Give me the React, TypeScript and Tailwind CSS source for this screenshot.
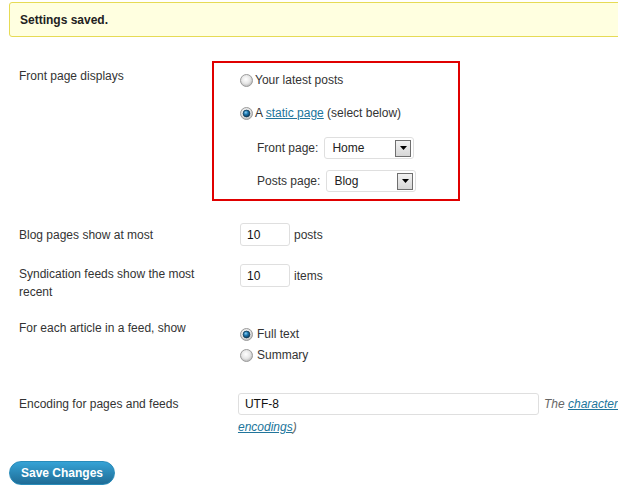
import React from 'react';

function Radio({ checked }: { checked?: boolean }) {
  return (
    <svg width="13" height="13" viewBox="0 0 13 13" className="shrink-0">
      <defs>
        <radialGradient id="rg-off" cx="45%" cy="40%" r="60%">
          <stop offset="0%" stopColor="#ffffff" />
          <stop offset="60%" stopColor="#e6e6e6" />
          <stop offset="100%" stopColor="#b8b8b8" />
        </radialGradient>
        <radialGradient id="rg-on" cx="40%" cy="35%" r="65%">
          <stop offset="0%" stopColor="#8fd0f2" />
          <stop offset="45%" stopColor="#1f7ab3" />
          <stop offset="100%" stopColor="#0b3a5c" />
        </radialGradient>
      </defs>
      <circle cx="6.5" cy="6.5" r="6" fill="url(#rg-off)" stroke="#9c9c9c" strokeWidth="1" />
      {checked && <circle cx="6.5" cy="6.5" r="3.4" fill="url(#rg-on)" stroke="#123a55" strokeWidth="0.8" />}
    </svg>
  );
}

function Select({ value }: { value: string }) {
  return (
    <div className="flex h-[22px] w-[90px] items-center justify-between rounded-[3px] border border-[#dfdfdf] bg-white pl-[7px] pr-[2px] text-[#222]">
      <span>{value}</span>
      <span className="flex h-[17px] w-[16px] items-center justify-center border border-[#6f6f6f] bg-gradient-to-b from-[#f2f2f2] to-[#d6d6d6]">
        <svg width="7" height="4" viewBox="0 0 7 4">
          <polygon points="0,0 7,0 3.5,4" fill="#000" />
        </svg>
      </span>
    </div>
  );
}

function NumberBox({ value }: { value: string }) {
  return (
    <div className="flex h-[23px] w-[50px] items-center rounded-[3px] border border-[#dfdfdf] bg-white pl-[6px] text-[#111]">
      {value}
    </div>
  );
}

export default function App() {
  return (
    <div className="h-[493px] w-[618px] overflow-hidden bg-white pl-[9px] font-['Liberation_Sans',Arial,sans-serif] text-[12px] leading-[18px] text-[#333]">
      <div className="mt-[2px] flex h-[35px] w-[640px] items-center rounded-[3px] border border-[#e6db55] bg-[#ffffe0] pl-[10px]">
        <p className="font-bold text-[#222]">Settings saved.</p>
      </div>

      <div className="pl-[10px]">
        {/* Front page displays */}
        <div className="mt-[24px] flex items-start">
          <div className="w-[193px] pt-[6px]">Front page displays</div>
          <div className="box-border h-[140px] w-[248px] border-2 border-[#e00000] pl-[26px] pt-[8px]">
            <label className="flex h-[18px] items-center gap-[2px]">
              <Radio />
              <span>Your latest posts</span>
            </label>
            <label className="mt-[15px] flex h-[18px] items-center gap-[2px]">
              <Radio checked />
              <span>
                A <a className="text-[#21759b] underline">static page</a> (select below)
              </span>
            </label>
            <div className="ml-[17px] mt-[15px] flex items-center gap-[6px]">
              <span>Front page:</span>
              <Select value="Home" />
            </div>
            <div className="ml-[17px] mt-[11px] flex items-center gap-[6px]">
              <span>Posts page:</span>
              <Select value="Blog" />
            </div>
          </div>
        </div>

        {/* Blog pages */}
        <div className="mt-[22px] flex items-center">
          <div className="w-[221px]">Blog pages show at most</div>
          <NumberBox value="10" />
          <span className="ml-[4px]">posts</span>
        </div>

        {/* Syndication */}
        <div className="mt-[18px] flex items-start">
          <div className="w-[221px] pr-[21px] pt-[1px]">Syndication feeds show the most recent</div>
          <div className="flex items-center">
            <NumberBox value="10" />
            <span className="ml-[4px]">items</span>
          </div>
        </div>

        {/* Feed article */}
        <div className="mt-[18px] flex items-start">
          <div className="w-[221px]">For each article in a feed, show</div>
          <div className="flex flex-col gap-[3px] pt-[6px]">
            <label className="flex h-[18px] items-center gap-[4px]">
              <Radio checked />
              <span>Full text</span>
            </label>
            <label className="flex h-[18px] items-center gap-[4px]">
              <Radio />
              <span>Summary</span>
            </label>
          </div>
        </div>

        {/* Encoding */}
        <div className="mt-[29px] flex items-start">
          <div className="w-[220px] pt-[2px]">Encoding for pages and feeds</div>
          <div className="flex flex-col">
            <div className="flex items-center whitespace-nowrap">
              <div className="flex h-[22px] w-[301px] items-center rounded-[3px] border border-[#dfdfdf] bg-white pl-[6px] text-[#111]">
                UTF-8
              </div>
              <span className="ml-[5px] italic text-[#666]">
                The <a className="text-[#21759b] underline">character</a>
              </span>
            </div>
            <div className="mt-[3px] italic text-[#666]">
              <a className="text-[#21759b] underline">encodings</a>)
            </div>
          </div>
        </div>
      </div>

      <button className="mt-[25px] flex h-[24px] w-[106px] items-center justify-center rounded-full border border-[#298cba] bg-gradient-to-b from-[#36a3d6] to-[#1f6c96] font-bold text-white">
        Save Changes
      </button>
    </div>
  );
}
